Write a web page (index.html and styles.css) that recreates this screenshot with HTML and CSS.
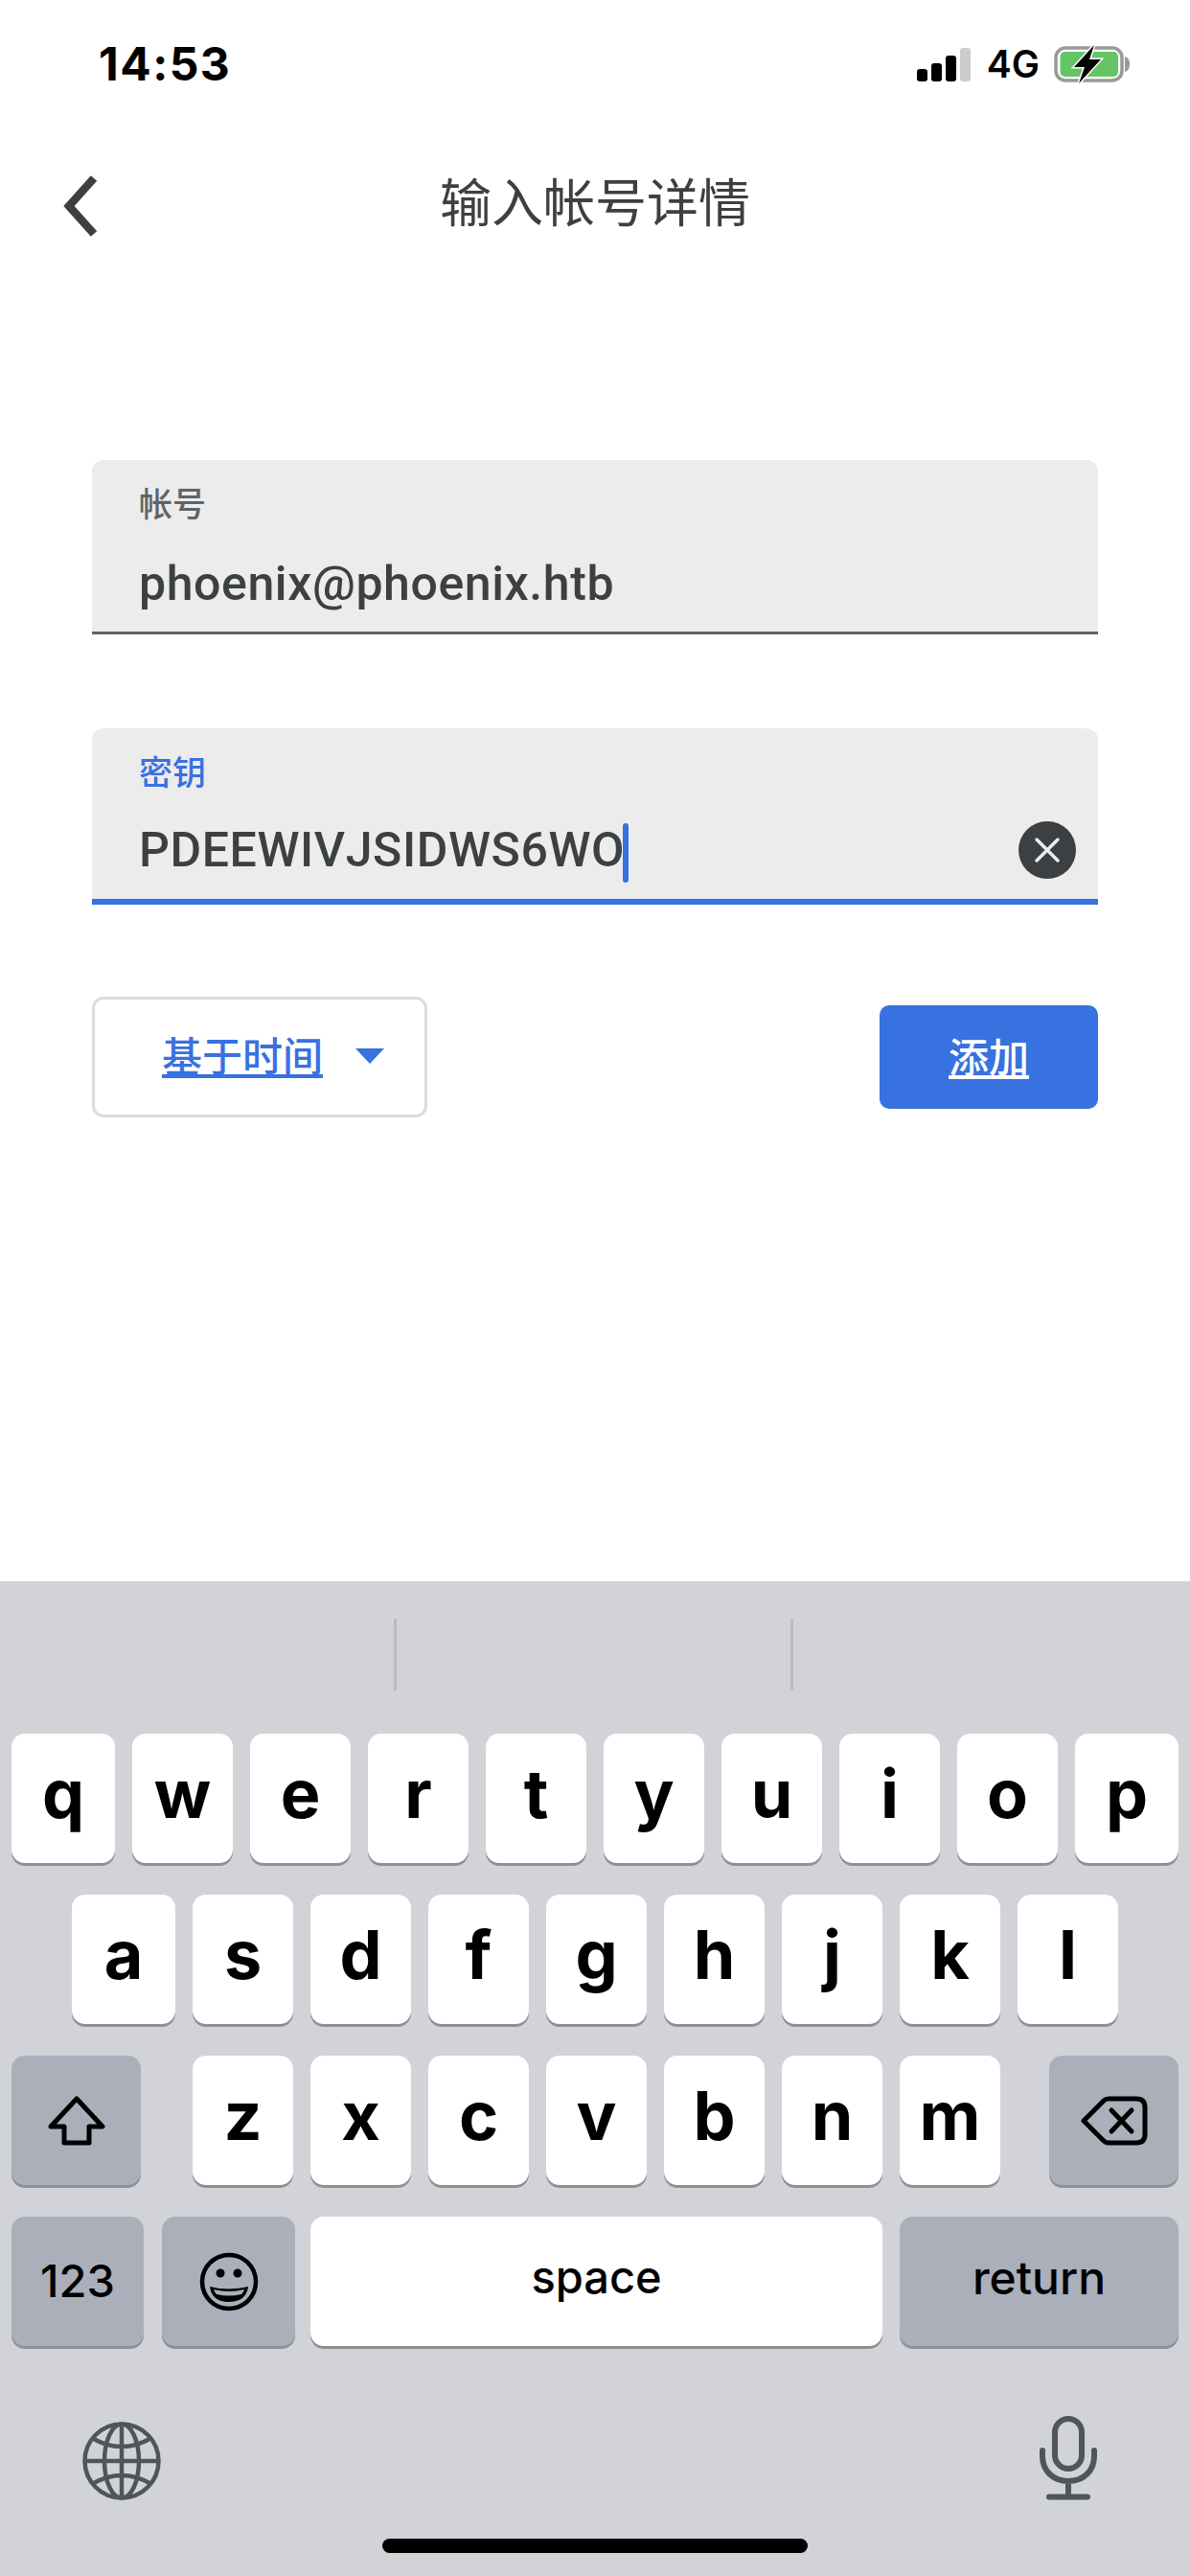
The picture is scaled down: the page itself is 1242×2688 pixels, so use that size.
FILE: index.html
```html
<!DOCTYPE html>
<html lang="zh">
<head>
    <meta charset="UTF-8">
    <meta name="viewport" content="width=device-width, initial-scale=1.0">
    <title>输入帐号详情</title>
    <link rel="stylesheet" href="styles.css">
</head>
<body>
<div class="status-bar">
    <span class="time">14:53</span>
    <div class="status-icons">
        <div class="signal">
            <i class="bar bar-1"></i>
            <i class="bar bar-2"></i>
            <i class="bar bar-3"></i>
            <i class="bar bar-4"></i>
        </div>
        <span class="network">4G</span>
        <svg class="battery" width="82" height="42" viewBox="0 0 82 42">
            <rect x="2" y="4" width="69" height="34" rx="10" fill="none" stroke="#999" stroke-width="3.5"/>
            <rect x="6.5" y="8" width="60.5" height="26" rx="5" fill="#65c466"/>
            <path d="M74 13c3 1 5 3 5 8s-2 7-5 8z" fill="#999"/>
            <path d="M42 1 21 24h11l-6 17 23-25H37z" fill="#000" stroke="#fff" stroke-width="3" paint-order="stroke"/>
        </svg>
    </div>
</div>

<div class="nav">
    <svg class="back" width="40" height="66" viewBox="0 0 40 66">
        <path d="M34 4 8 33l26 29" fill="none" stroke="#3c4043" stroke-width="8.5"/>
    </svg>
    <h1>输入帐号详情</h1>
</div>

<div class="form">
    <div class="field">
        <label>帐号</label>
        <div class="value-row">
            <span class="value">phoenix@phoenix.htb</span>
        </div>
    </div>

    <div class="field field-active">
        <label>密钥</label>
        <div class="value-row">
            <span class="value">PDEEWIVJSIDWS6WO<i class="caret"></i></span>
            <svg class="clear" width="60" height="60" viewBox="0 0 60 60">
                <circle cx="30" cy="30" r="30" fill="#3c4043"/>
                <path d="M19 19l22 22M41 19 19 41" stroke="#ececec" stroke-width="3.5" stroke-linecap="round"/>
            </svg>
        </div>
    </div>

    <div class="actions">
        <div class="select">
            <span class="select-text">基于时间</span>
            <i class="select-arrow"></i>
        </div>
        <div class="add-button">添加</div>
    </div>
</div>

<div class="keyboard">
    <div class="suggestions">
        <i class="divider"></i>
        <i class="divider"></i>
    </div>

    <div class="key-row">
        <div class="key key-edge">q</div>
        <div class="key">w</div>
        <div class="key">e</div>
        <div class="key">r</div>
        <div class="key">t</div>
        <div class="key">y</div>
        <div class="key">u</div>
        <div class="key">i</div>
        <div class="key">o</div>
        <div class="key key-edge">p</div>
    </div>

    <div class="key-row key-row-home">
        <div class="key key-edge">a</div>
        <div class="key">s</div>
        <div class="key">d</div>
        <div class="key">f</div>
        <div class="key">g</div>
        <div class="key">h</div>
        <div class="key">j</div>
        <div class="key">k</div>
        <div class="key">l</div>
    </div>

    <div class="key-row">
        <div class="key key-dark key-shift">
            <svg width="60" height="52" viewBox="0 0 60 52">
                <path d="M30 3 57 32H43V49H17V32H3z" fill="none" stroke="#000" stroke-width="5" stroke-linejoin="round"/>
            </svg>
        </div>
        <div class="key">z</div>
        <div class="key">x</div>
        <div class="key">c</div>
        <div class="key">v</div>
        <div class="key">b</div>
        <div class="key">n</div>
        <div class="key">m</div>
        <div class="key key-dark key-delete">
            <svg width="70" height="52" viewBox="0 0 70 52">
                <path d="M3 26 24 5q2-2 5-2H58q9 0 9 9V40q0 9-9 9H29q-3 0-5-2z" fill="none" stroke="#000" stroke-width="5" stroke-linejoin="round"/>
                <path d="M32 15 53 37M53 15 32 37" stroke="#000" stroke-width="5" stroke-linecap="round"/>
            </svg>
        </div>
    </div>

    <div class="key-row">
        <div class="key key-dark key-num">123</div>
        <div class="key key-dark key-emoji">
            <svg width="62" height="62" viewBox="0 0 62 62">
                <circle cx="31" cy="31" r="28" fill="none" stroke="#000" stroke-width="4.500"/>
                <circle cx="22" cy="22" r="4.500" fill="#000"/>
                <circle cx="40" cy="22" r="4.500" fill="#000"/>
                <path d="M11 36q20 5 40 0q-2 16-20 16T11 36z" fill="#000"/>
                <path d="M15 39q16 4 32 0q-1 3-3 5q-13 3-26 0q-2-2-3-5z" fill="#abafba"/>
            </svg>
        </div>
        <div class="key key-space">space</div>
        <div class="key key-dark key-return">return</div>
    </div>

    <div class="kb-bottom">
        <svg class="globe" width="82" height="82" viewBox="0 0 82 82" fill="none" stroke="#50555c" stroke-width="4.500">
            <circle cx="41" cy="41" r="38.500"/>
            <ellipse cx="41" cy="41" rx="18" ry="38.500"/>
            <path d="M41 2V80M2 41H80M10 17q31 18 62 0M10 65q31-18 62 0"/>
        </svg>
        <svg class="mic" width="62" height="88" viewBox="0 0 62 88" fill="none" stroke="#50555c" stroke-width="6" stroke-linecap="round">
            <rect x="17" y="3" width="28" height="52" rx="14"/>
            <path d="M4 36V42C4 58 16 68 31 68S58 58 58 42V36M31 68V84M11 84.500H51"/>
        </svg>
    </div>

    <div class="home-indicator"></div>
</div>
</body>
</html>
```

FILE: styles.css
```css
* {
    box-sizing: border-box;
}

body {
    width: 1242px;
    height: 2688px;
    margin: 0;
    background-color: #fff;
    color: #3c4043;
    font-family: Roboto, "Noto Sans CJK SC", sans-serif;
    display: flex;
    flex-direction: column;
    overflow: hidden;
}

.status-bar {
    height: 100px;
    padding: 42px 60px 0 103px;
    display: flex;
    justify-content: space-between;
    align-items: flex-start;
    color: #000;
    font-family: Inter, sans-serif;
}

.time {
    font-size: 48px;
    font-weight: 700;
    line-height: 50px;
    letter-spacing: 1.5px;
}

.status-icons {
    display: flex;
    align-items: center;
    height: 50px;
}

.signal {
    display: flex;
    align-items: flex-end;
    gap: 4px;
    height: 35px;
    margin-top: 1px;
    margin-right: 17px;
}

.bar {
    width: 11px;
    border-radius: 3px;
    background-color: #000;
}

.bar-1 {
    height: 13px;
}

.bar-2 {
    height: 19px;
}

.bar-3 {
    height: 27px;
}

.bar-4 {
    height: 35px;
    background-color: #ccc;
}

.network {
    font-size: 39px;
    font-weight: 600;
    line-height: 50px;
    margin-right: 15px;
}

.nav {
    height: 224px;
    display: flex;
    justify-content: center;
    align-items: center;
    position: relative;
}

.nav h1 {
    margin: 0;
    font-size: 54px;
    font-weight: 400;
    line-height: 60px;
    margin-top: 4px;
}

.back {
    position: absolute;
    left: 64px;
    top: 82px;
}

.form {
    padding: 156px 96px 0;
}

.field {
    height: 182px;
    margin-bottom: 98px;
    padding: 25px 24px 0 49px;
    background-color: #ececec;
    border-bottom: 3px solid #5f6368;
    border-radius: 12px 12px 0 0;
}

.field label {
    display: block;
    height: 46px;
    font-size: 35px;
    font-weight: 500;
    line-height: 46px;
    color: #5f6368;
}

.value-row {
    display: flex;
    justify-content: space-between;
    align-items: center;
    height: 60px;
    margin-top: 28px;
}

.value {
    font-size: 50px;
    font-weight: 500;
    line-height: 60px;
    letter-spacing: 0.6px;
    white-space: nowrap;
}

.field-active {
    height: 184px;
    margin-bottom: 96px;
    border-bottom: 6px solid #3871e0;
}

.field-active label {
    color: #3871e0;
}

.caret {
    display: inline-block;
    width: 6px;
    height: 62px;
    margin-left: -2px;
    border-radius: 3px;
    background-color: #3871e0;
    vertical-align: middle;
}

.clear {
    flex: none;
    margin-top: -4px;
    margin-right: -1px;
}

.actions {
    display: flex;
    justify-content: space-between;
    align-items: center;
}

.select {
    width: 350px;
    height: 126px;
    padding-left: 70px;
    display: flex;
    align-items: center;
    background-color: #fff;
    border: 3px solid #dadce0;
    border-radius: 12px;
}

.select-text {
    margin-top: -8px;
    font-size: 42px;
    font-weight: 500;
    color: #3871e0;
    text-decoration: underline;
}

.select-arrow {
    width: 0;
    height: 0;
    margin-left: 34px;
    margin-top: -2px;
    border-left: 15px solid transparent;
    border-right: 15px solid transparent;
    border-top: 16px solid #3871e0;
}

.add-button {
    width: 228px;
    height: 108px;
    padding-bottom: 6px;
    display: flex;
    justify-content: center;
    align-items: center;
    background-color: #3871e0;
    border-radius: 10px;
    color: #fff;
    font-size: 42px;
    font-weight: 500;
    text-decoration: underline;
}

.keyboard {
    margin-top: auto;
    height: 1038px;
    background-color: #d1d3d9;
    font-family: Inter, sans-serif;
    color: #000;
}

.suggestions {
    height: 159px;
    padding-top: 39px;
    padding-left: 411px;
    display: flex;
    gap: 411px;
}

.divider {
    width: 3px;
    height: 75px;
    background-color: #b9bbc1;
}

.key-row {
    display: flex;
    justify-content: center;
    gap: 18px;
    margin-bottom: 33px;
}

.key {
    width: 105px;
    height: 135px;
    padding-bottom: 11px;
    display: flex;
    justify-content: center;
    align-items: center;
    background-color: #fff;
    border-radius: 14px;
    box-shadow: 0 3px 0 #8f9095;
    font-size: 70px;
    font-weight: 700;
}

.key-edge {
    width: 108px;
}

.key-dark {
    padding-bottom: 0;
    background-color: #abafba;
}

.key-shift {
    width: 135px;
    margin-right: 36px;
}

.key-delete {
    width: 135px;
    margin-left: 33px;
}

.key-num {
    width: 138px;
    padding-bottom: 2px;
    font-size: 47px;
    font-weight: 500;
    margin-right: 1px;
}

.key-emoji {
    width: 139px;
    margin-right: -2px;
}

.key-space {
    width: 597px;
    font-size: 47px;
    font-weight: 500;
}

.key-return {
    width: 291px;
    padding-bottom: 8px;
    font-size: 48px;
    font-weight: 500;
}

.kb-bottom {
    height: 88px;
    margin-top: 73px;
    padding: 0 96px 0 86px;
    display: flex;
    justify-content: space-between;
    align-items: flex-end;
}

.home-indicator {
    width: 444px;
    height: 15px;
    margin: 40px auto 0;
    border-radius: 8px;
    background-color: #000;
}
```
